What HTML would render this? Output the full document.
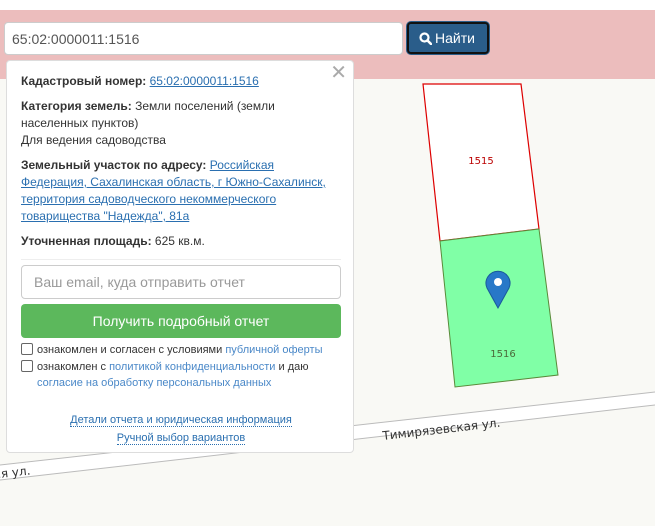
<!DOCTYPE html>
<html><head><meta charset="utf-8"><style>
*{box-sizing:border-box;margin:0;padding:0}
body{width:655px;height:526px;overflow:hidden;position:relative;background:#f9f9f5;font-family:"Liberation Sans",Arial,sans-serif;font-size:12px;color:#333}
.top{position:absolute;left:0;top:0;width:655px;height:10px;background:#fff}
.band{position:absolute;left:0;top:10px;width:655px;height:69px;background:#ecbdbd}
.inp{position:absolute;left:4px;top:22px;width:399px;height:33px;background:#fff;border:1px solid #ccc;border-radius:4px;font-size:14px;padding:8px 7px;color:#555}
.btn{position:absolute;left:407px;top:22px;width:82px;height:32px;background:#2a5d8a;border:2px solid #111;box-shadow:0 0 0 1px #2a5d8a;border-radius:4px;color:#fff;font-size:14px;padding:6px 0 0 10px;font-weight:500}
.btn svg{vertical-align:-2px;margin-right:3px}
.panel{position:absolute;left:6px;top:60px;width:348px;height:393px;background:#fff;border:1px solid #ddd;border-radius:4px;padding:12px 14px;line-height:17px}
.panel p{margin-bottom:8px}
a{color:#2a6fb0}
.u{text-decoration:underline}
.close{position:absolute;right:6px;top:4px;font-size:20px;color:#aaa}
.em{position:absolute;left:14px;top:204px;width:320px;height:34px;border:1px solid #ccc;border-radius:4px;font-size:14px;color:#999;padding:8px 12px}
.gb{position:absolute;left:14px;top:243px;width:320px;height:34px;background:#5cb85c;border-radius:4px;color:#fff;font-size:14px;text-align:center;line-height:34px}
.cb{position:absolute;left:14px;font-size:11px;line-height:16px}
.cb i{display:inline-block;width:12px;height:12px;border:1px solid #666;border-radius:2px;vertical-align:-2px;margin-right:4px}
.cb a{color:#4a88c8}
.lk{position:absolute;left:0;width:348px;text-align:center;font-size:11px}
.lk a{border-bottom:1px dotted #2a6fb0}
</style></head><body>
<svg style="position:absolute;left:0;top:0" width="655" height="526">
<polygon points="0,465 655,392 655,405 0,480" fill="#fff"/>
<line x1="0" y1="465" x2="655" y2="392" stroke="#bbb"/>
<line x1="0" y1="480" x2="655" y2="405" stroke="#bbb"/>
<polygon points="423,84 521,84 539,229 440,241" fill="#fff" stroke="#d00" stroke-width="1.2"/>
<polygon points="440,241 539,229 558,375 455,387" fill="#80ffa6" stroke="#5a8a3a" stroke-width="1"/>
<text x="481" y="164" font-size="10" fill="#b00" text-anchor="middle" font-family="DejaVu Sans">1515</text>
<text x="503" y="357" font-size="10" fill="#4a6a3a" text-anchor="middle" font-family="DejaVu Sans">1516</text>
<path d="M498,308 L487,288 A12,12 0 1 1 509,288 Z" fill="#2878c8" stroke="#1a5a9a"/>
<circle cx="498" cy="282" r="4" fill="#fff"/>
<text x="383" y="440" font-size="12" fill="#333" transform="rotate(-6.5 383 440)" font-family="DejaVu Sans">Тимирязевская ул.</text>
<text x="-6" y="478" font-size="12" fill="#333" transform="rotate(-6.5 0 478)" font-family="DejaVu Sans">ая ул.</text>
</svg>
<div class="top"></div><div class="band"></div>
<div class="inp">65:02:0000011:1516</div>
<div class="btn"><svg width="13" height="13" viewBox="0 0 13 13"><circle cx="5.5" cy="5.5" r="4" fill="none" stroke="#fff" stroke-width="2.2"/><line x1="8.5" y1="8.5" x2="12" y2="12" stroke="#fff" stroke-width="2.6" stroke-linecap="round"/></svg>Найти</div>
<div class="panel">
<span class="close">✕</span>
<p><b>Кадастровый номер:</b> <a class="u">65:02:0000011:1516</a></p>
<p><b>Категория земель:</b> Земли поселений (земли населенных пунктов)<br>Для ведения садоводства</p>
<p><b>Земельный участок по адресу:</b> <a class="u">Российская Федерация, Сахалинская область, г Южно-Сахалинск, территория садоводческого некоммерческого товарищества "Надежда", 81а</a></p>
<p><b>Уточненная площадь:</b> 625 кв.м.</p>
<div style="position:absolute;left:14px;top:198px;width:320px;border-top:1px solid #eee"></div>
<div class="em">Ваш email, куда отправить отчет</div>
<div class="gb">Получить подробный отчет</div>
<div class="cb" style="top:281px"><i></i>ознакомлен и согласен с условиями <a>публичной оферты</a></div>
<div class="cb" style="top:298px"><i></i>ознакомлен с <a>политикой конфиденциальности</a> и даю<br><span style="margin-left:16px"><a>согласие на обработку персональных данных</a></span></div>
<div class="lk" style="top:351px"><a>Детали отчета и юридическая информация</a></div>
<div class="lk" style="top:369px"><a>Ручной выбор вариантов</a></div>
</div>
</body></html>
